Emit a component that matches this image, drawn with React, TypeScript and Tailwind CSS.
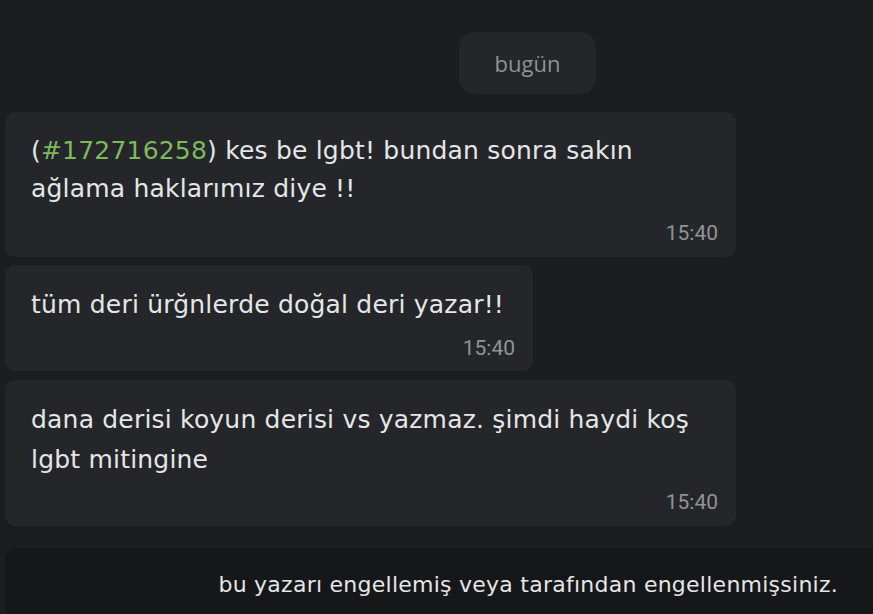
import React from "react";

const Time = ({ children }: { children: React.ReactNode }) => (
  <div className="flex justify-end text-[21px] leading-[24px] text-[#8f949a]" style={{ fontFamily: "Roboto, 'Liberation Sans', sans-serif" }}>
    {children}
  </div>
);

export default function App() {
  return (
    <div className="w-[873px] h-[614px] overflow-hidden bg-[#1c1d1f] flex flex-col" style={{ fontFamily: "'DejaVu Sans', sans-serif" }}>
      <div className="pt-[32px] pl-[459px]">
        <div className="w-[137px] h-[62px] rounded-[16px] bg-[#252628] flex items-center justify-center text-[22px] text-[#8c9298]" style={{ fontFamily: "'Open Sans', sans-serif" }}>
          bugün
        </div>
      </div>
      <div className="flex flex-col gap-[8px] pl-[5px] pt-[18px]">
        <div className="w-[731px] rounded-[10px] bg-[#252629] pl-[26px] pr-[18px] pt-[20px] pb-[12px]">
          <div className="text-[25px] leading-[38px] tracking-[0.2px] text-[#e4e6e8]">
            (<span className="text-[#7cba5b]">#172716258</span>) kes be lgbt! bundan sonra sakın
            <br />
            ağlama haklarımız diye !!
          </div>
          <div className="mt-[13px]"><Time>15:40</Time></div>
        </div>
        <div className="w-[528px] rounded-[10px] bg-[#252629] pl-[26px] pr-[18px] pt-[21px] pb-[11px]">
          <div className="text-[25px] leading-[38px] tracking-[0.2px] text-[#e4e6e8]">tüm deri ürğnlerde doğal deri yazar!!</div>
          <div className="mt-[12px]"><Time>15:40</Time></div>
        </div>
        <div className="w-[731px] mt-[1px] rounded-[10px] bg-[#252629] pl-[26px] pr-[18px] pt-[20px] pb-[12px]">
          <div className="text-[25px] leading-[40px] tracking-[0.2px] text-[#e4e6e8]">
            dana derisi koyun derisi vs yazmaz. şimdi haydi koş
            <br />
            lgbt mitingine
          </div>
          <div className="mt-[10px]"><Time>15:40</Time></div>
        </div>
      </div>
      <div className="ml-[5px] mt-[22px] flex-1 rounded-tl-[12px] bg-[#161719] flex justify-end pr-[35px] pt-[22px]">
        <div className="text-[22px] leading-[30px] tracking-[0.25px] text-[#e4e6e8]">bu yazarı engellemiş veya tarafından engellenmişsiniz.</div>
      </div>
    </div>
  );
}
